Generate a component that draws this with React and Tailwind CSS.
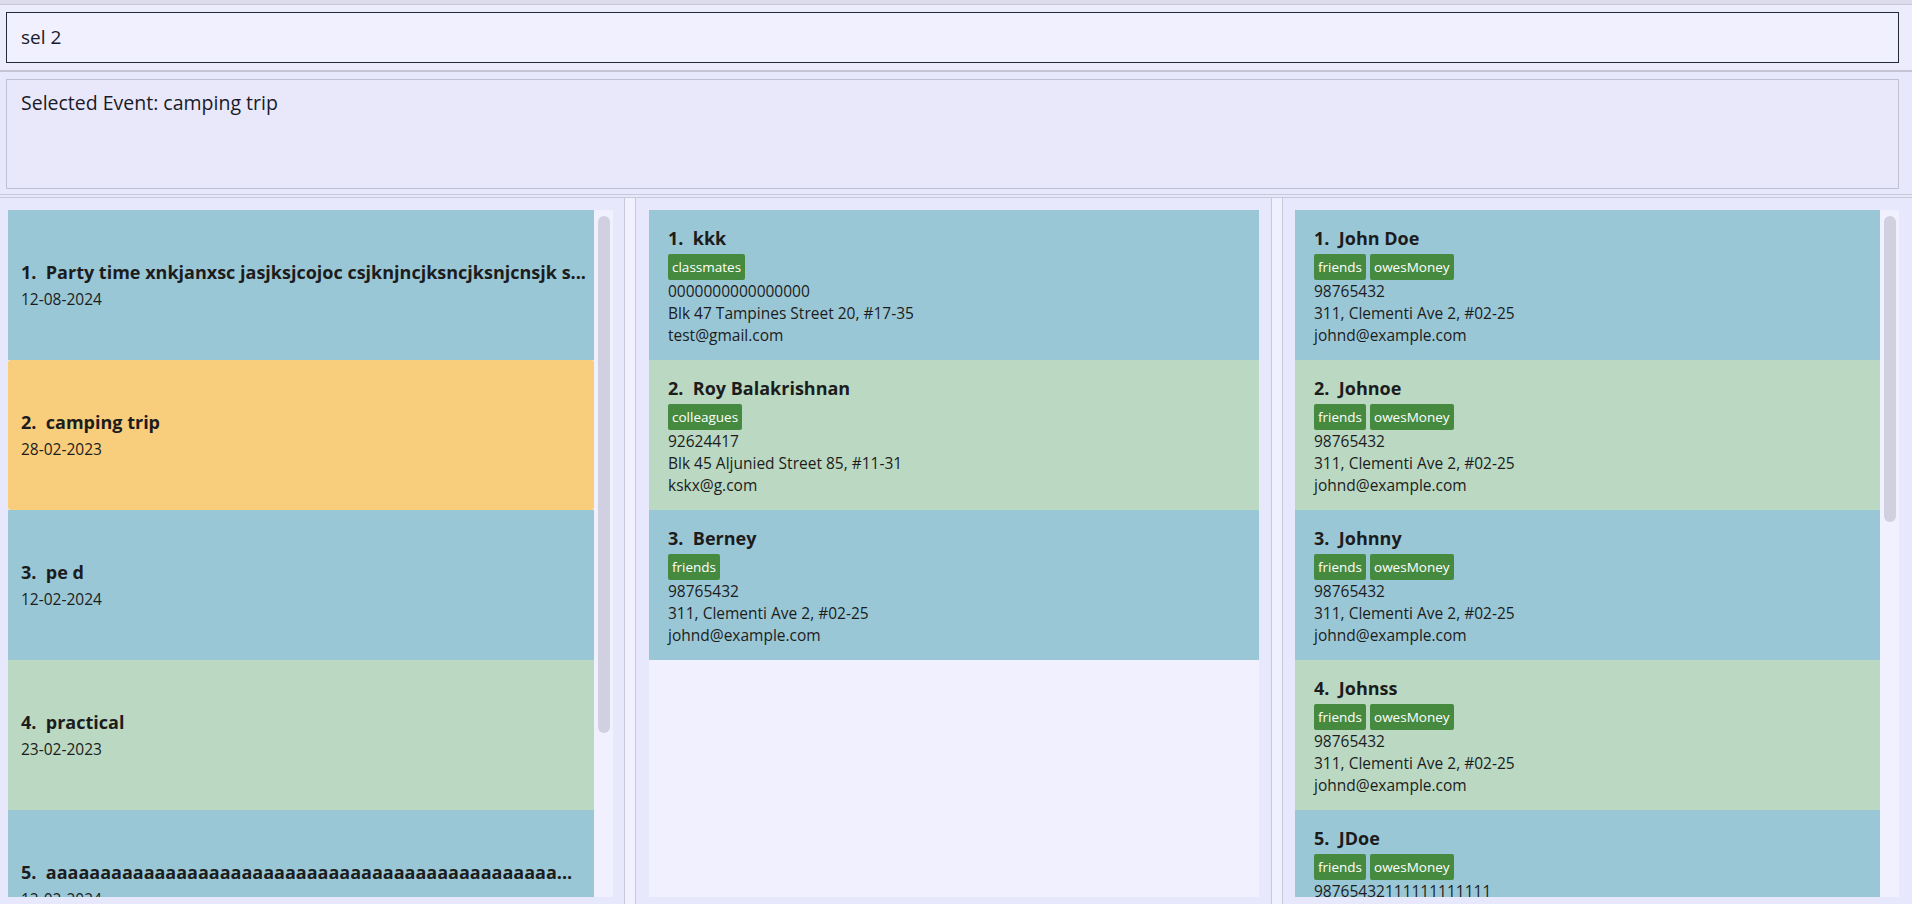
import React from "react";

const events = [
  { n: 1, name: "Party time xnkjanxsc jasjksjcojoc csjknjncjksncjksnjcnsjk s...", date: "12-08-2024", color: "bg-[#9ac7d6]" },
  { n: 2, name: "camping trip", date: "28-02-2023", color: "bg-[#f8ce7c] rounded-[3px]" },
  { n: 3, name: "pe d", date: "12-02-2024", color: "bg-[#9ac7d6]" },
  { n: 4, name: "practical", date: "23-02-2023", color: "bg-[#bad8c2]" },
  { n: 5, name: "aaaaaaaaaaaaaaaaaaaaaaaaaaaaaaaaaaaaaaaaaaaaaaa...", date: "12-02-2024", color: "bg-[#9ac7d6]" },
];

const middle = [
  { n: 1, name: "kkk", tags: ["classmates"], phone: "0000000000000000", addr: "Blk 47 Tampines Street 20, #17-35", email: "test@gmail.com" },
  { n: 2, name: "Roy Balakrishnan", tags: ["colleagues"], phone: "92624417", addr: "Blk 45 Aljunied Street 85, #11-31", email: "kskx@g.com" },
  { n: 3, name: "Berney", tags: ["friends"], phone: "98765432", addr: "311, Clementi Ave 2, #02-25", email: "johnd@example.com" },
];

const right = [
  { n: 1, name: "John Doe", tags: ["friends", "owesMoney"], phone: "98765432", addr: "311, Clementi Ave 2, #02-25", email: "johnd@example.com" },
  { n: 2, name: "Johnoe", tags: ["friends", "owesMoney"], phone: "98765432", addr: "311, Clementi Ave 2, #02-25", email: "johnd@example.com" },
  { n: 3, name: "Johnny", tags: ["friends", "owesMoney"], phone: "98765432", addr: "311, Clementi Ave 2, #02-25", email: "johnd@example.com" },
  { n: 4, name: "Johnss", tags: ["friends", "owesMoney"], phone: "98765432", addr: "311, Clementi Ave 2, #02-25", email: "johnd@example.com" },
  { n: 5, name: "JDoe", tags: ["friends", "owesMoney"], phone: "98765432111111111111", addr: "311, Clementi Ave 2, #02-25", email: "johnd@example.com" },
];

function EventCard({ e }) {
  return (
    <div className={`h-[150px] shrink-0 flex flex-col justify-center pl-[13px] pr-[6px] ${e.color}`}>
      <div className="h-[24px] leading-[24px] text-[18px] font-bold text-[#1c1c1c] whitespace-nowrap overflow-hidden">
        {e.n}.&nbsp;&nbsp;{e.name}
      </div>
      <div className="mt-[4px] h-[22px] leading-[22px] text-[15.5px] text-[#1c1c1c]">{e.date}</div>
    </div>
  );
}

function PersonCard({ p, idx }) {
  const color = idx % 2 === 0 ? "bg-[#9ac7d6]" : "bg-[#bad8c2]";
  return (
    <div className={`h-[150px] shrink-0 flex flex-col pt-[16px] pl-[19px] ${color}`}>
      <div className="h-[24px] leading-[24px] text-[18px] font-bold text-[#1c1c1c] whitespace-nowrap">
        {p.n}.&nbsp;&nbsp;{p.name}
      </div>
      <div className="mt-[4px] flex gap-[4px]">
        {p.tags.map((t) => (
          <span key={t} className="h-[26px] leading-[26px] px-[4px] rounded-[2px] bg-[#468a3f] text-white text-[13.5px]">
            {t}
          </span>
        ))}
      </div>
      <div className="h-[22px] leading-[22px] text-[15.5px] text-[#1c1c1c]">{p.phone}</div>
      <div className="h-[22px] leading-[22px] text-[15.5px] text-[#1c1c1c]">{p.addr}</div>
      <div className="h-[22px] leading-[22px] text-[15.5px] text-[#1c1c1c]">{p.email}</div>
    </div>
  );
}

function ScrollCol({ thumbH }) {
  return (
    <div className="w-[19px] shrink-0 bg-[#f0f0fe] pt-[6px] pl-[4px]">
      <div className="w-[12px] rounded-[6px] bg-[#d0d0e0]" style={{ height: thumbH }} />
    </div>
  );
}

export default function App() {
  return (
    <div className="w-[1912px] h-[904px] overflow-hidden bg-[#e8e8fc] font-['Open_Sans','Noto_Sans',sans-serif] flex flex-col">
      {/* top strip */}
      <div className="h-[5px] shrink-0 bg-[#dcdcec] border-b border-[#c8c8d8]" />
      {/* command box */}
      <div className="shrink-0 pt-[7px] pb-[7px] pl-[6px] pr-[13px] bg-[#ececfc]">
        <div className="h-[51px] border border-[#252a38] bg-[#f0f0fe] flex items-center pl-[14px] text-[19px] text-[#1a1a2a]">
          sel 2
        </div>
      </div>
      <div className="h-[2px] shrink-0 bg-[#c4c4d4]" />
      {/* result box */}
      <div className="shrink-0 pt-[7px] pb-[5px] pl-[6px] pr-[13px]">
        <div className="h-[110px] border border-[#c0c0d0] bg-[#e8e8fa] pl-[14px] pt-[10px] text-[19.5px] leading-[26px] text-[#1a1a2a]">
          Selected Event: camping trip
        </div>
      </div>
      <div className="h-[1px] shrink-0 bg-[#c8c8d8]" />
      <div className="h-[2px] shrink-0" />
      {/* panels */}
      <div className="flex-1 min-h-0 flex border-t border-[#c8c8d8]">
        {/* left */}
        <div className="w-[625px] shrink-0 border-r border-[#c8c8d8] pt-[12px] pl-[8px] pb-[7px] flex">
          <div className="w-[586px] shrink-0 flex flex-col overflow-hidden">
            {events.map((e) => (
              <EventCard key={e.n} e={e} />
            ))}
          </div>
          <ScrollCol thumbH={517} />
        </div>
        <div className="w-[10px] shrink-0 bg-[#f0f0fe]" />
        {/* middle */}
        <div className="w-[637px] shrink-0 border-l border-r border-[#c8c8d8] pt-[12px] pl-[13px] pr-[12px] pb-[7px] flex">
          <div className="flex-1 bg-[#f0f0fe] flex flex-col overflow-hidden">
            {middle.map((p, i) => (
              <PersonCard key={p.n} p={p} idx={i} />
            ))}
          </div>
        </div>
        <div className="w-[10px] shrink-0 bg-[#f0f0fe]" />
        {/* right */}
        <div className="flex-1 border-l border-[#c8c8d8] pt-[12px] pl-[12px] pb-[7px] flex">
          <div className="w-[585px] shrink-0 flex flex-col overflow-hidden">
            {right.map((p, i) => (
              <PersonCard key={p.n} p={p} idx={i} />
            ))}
          </div>
          <ScrollCol thumbH={306} />
        </div>
      </div>
    </div>
  );
}
